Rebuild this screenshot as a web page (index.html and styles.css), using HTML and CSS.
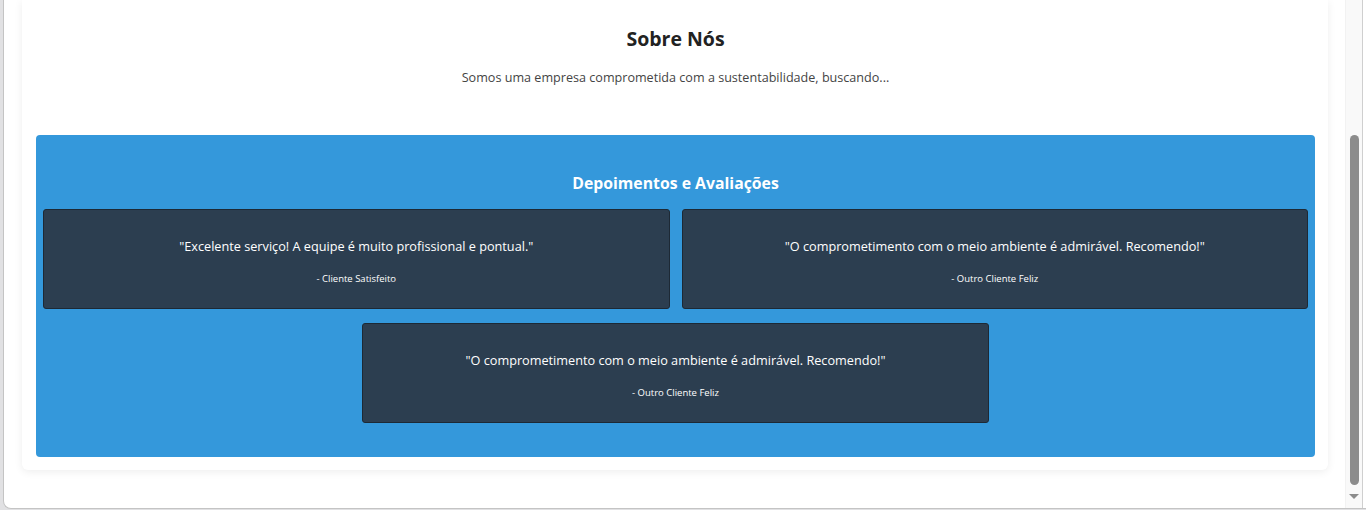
FILE: index.html
```html
<!DOCTYPE html>
<html lang="pt">
<head>
<meta charset="utf-8">
<title>Sobre Nós</title>
<link rel="stylesheet" href="styles.css">
</head>
<body>
<div class="frame">
  <main class="viewport">
    <div class="page-card">
      <section class="about">
        <h2 class="about-title">Sobre Nós</h2>
        <p class="about-text">Somos uma empresa comprometida com a sustentabilidade, buscando...</p>
      </section>
      <section class="reviews">
        <h2 class="reviews-title">Depoimentos e Avaliações</h2>
        <div class="review-grid">
          <div class="review">
            <p class="review-quote">"Excelente serviço! A equipe é muito profissional e pontual."</p>
            <p class="review-author">- Cliente Satisfeito</p>
          </div>
          <div class="review">
            <p class="review-quote">"O comprometimento com o meio ambiente é admirável. Recomendo!"</p>
            <p class="review-author">- Outro Cliente Feliz</p>
          </div>
          <div class="review">
            <p class="review-quote">"O comprometimento com o meio ambiente é admirável. Recomendo!"</p>
            <p class="review-author">- Outro Cliente Feliz</p>
          </div>
        </div>
      </section>
    </div>
  </main>
  <div class="scrollbar">
    <div class="scroll-space"></div>
    <div class="scroll-thumb"></div>
    <div class="scroll-arrow"></div>
  </div>
</div>
</body>
</html>
```
FILE: styles.css
```css
* { box-sizing: border-box; }

html, body {
  margin: 0;
  height: 510px;
  overflow: hidden;
}

body {
  background: #e1e1e3;
  padding-left: 3px;
  font-family: "Open Sans", "Noto Sans", sans-serif;
}

.frame {
  display: flex;
  height: 509px;
  background: #fff;
  border-left: 1px solid #c4c4c4;
  border-bottom: 1px solid #c4c4c4;
  border-bottom-left-radius: 8px;
  overflow: hidden;
}

.viewport {
  flex: 1;
  padding-left: 18px;
  padding-right: 17px;
}

.page-card {
  background: #fff;
  height: 470px;
  border-radius: 0 0 6px 6px;
  box-shadow: 0 2px 8px rgba(0, 0, 0, 0.07);
  padding: 0 13px 13px 14px;
  display: flex;
  flex-direction: column;
}

.about {
  flex: 0 0 135px;
  text-align: center;
  padding-top: 26px;
}

.about-title {
  margin: 0;
  font-size: 19.5px;
  line-height: 26px;
  font-weight: 700;
  color: #222;
}

.about-text {
  margin: 17px 0 0;
  font-size: 12.6px;
  line-height: 18px;
  color: #444;
}

.reviews {
  background: #3498db;
  border-radius: 4px;
  padding: 36px 7px 34px;
  flex: 0 0 322px;
}

.reviews-title {
  margin: 0 0 14px;
  text-align: center;
  color: #fff;
  font-size: 15.8px;
  line-height: 24px;
  font-weight: 700;
}

.review-grid {
  display: flex;
  flex-wrap: wrap;
  justify-content: center;
  column-gap: 12px;
  row-gap: 14px;
}

.review {
  flex: 0 0 calc(50% - 6px);
  background: #2c3e50;
  border: 1px solid #1d2935;
  border-radius: 3px;
  padding: 27px 20px 0;
  height: 100px;
  text-align: center;
  color: #fff;
}

.review-quote {
  margin: 0;
  font-size: 12.7px;
  line-height: 18px;
}

.review-author {
  margin: 17px 0 0;
  font-size: 9.5px;
  line-height: 14px;
}

.scrollbar {
  flex: 0 0 18px;
  display: flex;
  flex-direction: column;
  align-items: center;
  background: #f9f9f9;
  border-right: 1px solid #cfcfcf;
  border-left: 1px solid #f2f2f2;
  margin-right: 3px;
}

.scroll-space {
  height: 135px;
}

.scroll-thumb {
  width: 9px;
  height: 350px;
  background: #8c8c8c;
  border-radius: 5px;
}

.scroll-arrow {
  margin-top: 9px;
  width: 0;
  height: 0;
  border-left: 5px solid transparent;
  border-right: 5px solid transparent;
  border-top: 5px solid #8c8c8c;
}
```
